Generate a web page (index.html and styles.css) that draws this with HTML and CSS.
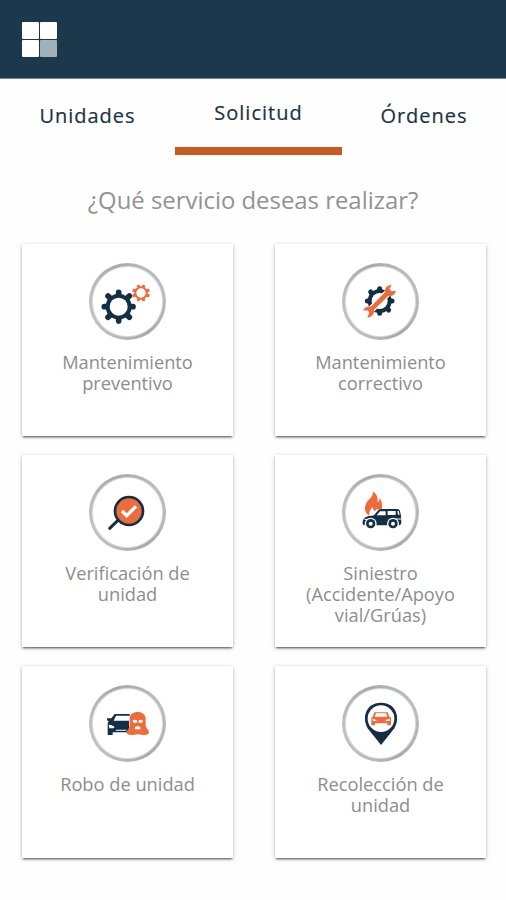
FILE: index.html
```
<!DOCTYPE html>
<html lang="es">
<head>
<meta charset="utf-8">
<title>Solicitud</title>
<link rel="stylesheet" href="styles.css">
</head>
<body>
<header class="topbar">
  <div class="logo"><i></i><i></i><i></i><i class="dim"></i></div>
</header>
<nav class="tabs">
  <a class="tab">Unidades</a>
  <a class="tab active">Solicitud</a>
  <a class="tab">Órdenes</a>
</nav>
<main>
  <h1 class="question">¿Qué servicio deseas realizar?</h1>
  <section class="grid">
    <article class="card">
      <div class="ring"><svg viewBox="27 24 231 231">
        <g class="navy-line round" stroke-width="17"><path d="M116 112V198M73 155H159M84 123L148 187M84 187L148 123"/></g>
        <circle class="navy" cx="116" cy="155" r="39"/><circle class="white" cx="116" cy="155" r="27"/>
        <g class="orange-line" stroke-width="9"><path d="M174 90L192 138M192 90L174 138M158 105L208 123M158 123L208 105"/></g>
        <circle class="orange" cx="183" cy="114" r="20"/><circle class="white" cx="183" cy="114" r="14"/>
      </svg></div>
      <p>Mantenimiento preventivo</p>
    </article>
    <article class="card">
      <div class="ring"><svg viewBox="27 24 231 231">
        <g class="navy-line round" stroke-width="15"><path d="M140 101V175M103 138H177M113 111L167 165M113 165L167 111"/></g>
        <circle class="navy" cx="140" cy="138" r="36"/><circle class="white" cx="140" cy="138" r="24"/>
        <path class="white-line" stroke-width="22" d="M110 168L171 107"/>
        <path class="orange" d="M176 89C163 90 154 99 156 112L113 155C105 153 94 157 90 166L106 167L109 173L103 187C115 188 125 178 123 165L166 122C177 125 187 118 189 107L174 109L169 103Z"/>
      </svg></div>
      <p>Mantenimiento correctivo</p>
    </article>
    <article class="card">
      <div class="ring"><svg viewBox="27 24 231 231">
        <path class="navy-line round" stroke-width="9" d="M89 187L116 161"/>
        <circle class="orange" cx="147" cy="135" r="43"/>
        <circle class="navy-line" stroke-width="8" cx="147" cy="135" r="42"/>
        <path class="white-line" stroke-width="10" d="M126 135L140 149L168 121"/>
      </svg></div>
      <p>Verificación de unidad</p>
    </article>
    <article class="card">
      <div class="ring"><svg viewBox="27 24 231 231">
        <path class="orange" d="M120 77C119 97 105 98 99 113C91 130 99 143 108 149C108 137 112 130 119 124C120 129 122 133 124 136L132 130H146C149 120 148 107 139 95C140 104 137 107 134 109C135 94 132 84 120 77Z"/>
        <path class="navy" d="M123 148L136 132Q139 129 145 129H193Q199 129 201 135L204 149L205 172L201 178H96Q87 178 89 168C90 155 98 151 123 148Z"/>
        <path class="white" d="M131 148L141 136H158V148ZM164 135H188V147H164ZM193 135H197L200 146H195Z"/>
        <path class="white-line" stroke-width="3" d="M94 160H106M187 159H205"/>
        <circle class="white" cx="113" cy="173" r="18"/><circle class="white" cx="180" cy="173" r="18"/>
        <circle class="navy" cx="113" cy="173" r="14"/><circle class="navy" cx="180" cy="173" r="14"/>
        <circle class="white" cx="113" cy="173" r="6"/><circle class="white" cx="180" cy="173" r="6"/>
      </svg></div>
      <p>Siniestro (Accidente/Apoyo vial/Grúas)</p>
    </article>
    <article class="card">
      <div class="ring"><svg viewBox="27 24 231 231">
        <path class="navy" d="M104 111H148L151 116H108L101 131H147V166H98V174H83V139Q83 135 87 133L81 130V124H94Z"/>
        <path class="white" d="M86 143Q96 143 104 150L100 154H88ZM109 158H139V161H106Z"/>
        <path class="orange" d="M149 145V125C150 111 160 105 173 105C187 105 196 112 197 125V145C198 156 208 157 207 169Q202 175 190 174L174 172L157 174Q144 175 140 169C138 159 148 158 149 145Z"/>
        <path class="white" d="M158 130Q163 126 171 130V137H160ZM176 130Q183 126 188 130L187 137H176ZM165 150Q173 145 181 150V157H165Z"/>
      </svg></div>
      <p>Robo de unidad</p>
    </article>
    <article class="card">
      <div class="ring"><svg viewBox="27 24 231 231">
        <path class="navy" d="M144 204L108 159C84 129 95 77 144 77C193 77 204 129 180 159Z"/>
        <circle class="white" cx="144" cy="125" r="40"/>
        <path class="orange" d="M124 106H164L169 119L174 122V145H163V139H126V145H115V122L119 119Z"/>
        <path class="white" d="M129 109H159L163 119H125ZM118 125L130 129V132H120ZM171 125L158 129V132H169Z"/>
      </svg></div>
      <p>Recolección de unidad</p>
    </article>
  </section>
</main>
</body>
</html>
```
FILE: styles.css
```
* { box-sizing: border-box; }
body {
  margin: 0;
  min-height: 900px;
  background: #fefefe;
  font-family: "Open Sans", "Noto Sans", sans-serif;
}
.topbar {
  height: 79px;
  padding: 22px;
  background: #1b384d;
  border-bottom: 1px solid #6f8290;
}
.logo {
  display: grid;
  grid-template-columns: 17px 17px;
  grid-auto-rows: 17px;
  gap: 1px;
}
.logo i { background: #fff; border-radius: 1px; }
.logo .dim { background: #a2b0ba; }
.tabs {
  display: grid;
  grid-template-columns: 175px 167px 164px;
  height: 76px;
}
.tab {
  padding-top: 23px;
  text-align: center;
  font-size: 20px;
  line-height: 28px;
  letter-spacing: 1px;
  -webkit-text-stroke: .2px #203344;
  color: #203344;
}
.tab.active {
  padding-top: 20px;
  border-bottom: 8px solid #c85a20;
}
.question {
  margin: 29px 0 28px;
  text-align: center;
  font-size: 23.9px;
  line-height: 32px;
  font-weight: 400;
  color: #929292;
}
.grid {
  display: grid;
  grid-template-columns: 211px 211px;
  grid-auto-rows: 192px;
  gap: 19px 42px;
  padding: 0 0 42px 22px;
}
.card {
  padding-top: 19px;
  background: #fff;
  box-shadow: 0 2px 2px -1px rgba(0, 0, 0, .6), 0 1px 4px rgba(0, 0, 0, .25);
  text-align: center;
}
.ring {
  width: 77px;
  height: 77px;
  margin: 0 auto;
  border-radius: 50%;
  background:
    radial-gradient(circle, #fff 34px, transparent 36px),
    linear-gradient(65deg, #c9c9c9, #a8a8a8 55%, #c4c4c4);
}
.ring svg { display: block; width: 77px; height: 77px; }
.card p {
  width: 160px;
  margin: 11px auto 0;
  font-size: 18.25px;
  line-height: 21px;
  color: #8d8d8d;
}
.navy { fill: #142f45; }
.orange { fill: #ee6c3c; }
.white { fill: #fff; }
.navy-line { fill: none; stroke: #142f45; }
.orange-line { fill: none; stroke: #ee6c3c; }
.white-line { fill: none; stroke: #fff; }
.round { stroke-linecap: round; }
```
